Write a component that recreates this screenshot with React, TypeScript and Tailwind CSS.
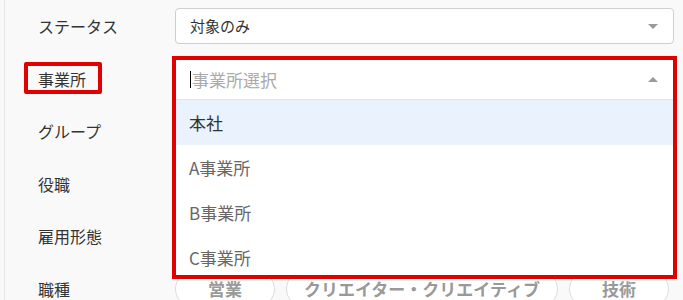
import React from "react";

const font = { fontFamily: '"Noto Sans CJK JP", "Noto Sans", sans-serif' };

function Label({ children }: { children: React.ReactNode }) {
  return (
    <div className="w-[170px] shrink-0 pl-[33px] text-[16px] leading-[24px] text-[#333]">{children}</div>
  );
}

function Row({ children }: { children: React.ReactNode }) {
  return <div className="flex h-[52.5px] items-center">{children}</div>;
}

export default function App() {
  const options = ["A事業所", "B事業所", "C事業所"];
  return (
    <div className="h-[300px] w-[683px] overflow-hidden bg-[#f9f9f9] pl-[4px]" style={font}>
      <div className="h-full border-l border-[#e6e6e6]">
        <Row>
          <Label>ステータス</Label>
          <div className="flex h-[36px] w-[499px] items-center justify-between rounded-[4px] border border-[#cfcfcf] bg-white pl-[14px] pr-[15px]">
            <span className="text-[15px] text-[#333]">対象のみ</span>
            <span className="h-0 w-0 border-x-[5.5px] border-t-[5px] border-x-transparent border-t-[#9a9a9a]" />
          </div>
        </Row>
        <Row>
          <div className="relative w-[170px] shrink-0 pl-[33px] text-[16px] leading-[24px] text-[#333]">
            事業所
            <span className="absolute left-[19px] top-[-5px] h-[32px] w-[78px] rounded-[2px] border-[4px] border-[#e00000]" />
          </div>
          <div className="relative h-[40px] w-[499px]">
            <div className="absolute left-0 right-0 top-0 z-10 bg-white">
              <div className="flex h-[40px] items-center justify-between border border-b-0 border-[#cfcfcf] pl-[14px] pr-[15px]">
                <span className="flex items-center text-[17px] text-[#aaa]">
                  <span className="mr-[1px] h-[17px] w-[1px] bg-black" />
                  事業所選択
                </span>
                <span className="h-0 w-0 border-x-[5.5px] border-b-[5px] border-x-transparent border-b-[#9a9a9a]" />
              </div>
              <div className="h-[177px] overflow-hidden border-x border-t border-[#e3e3e3]">
                <div className="flex h-[45px] items-center bg-[#eaf3fd] pl-[13px] text-[17px] text-[#333]">本社</div>
                {options.map((o) => (
                  <div key={o} className="flex h-[45px] items-center pl-[13px] text-[17px] text-[#666]">
                    {o}
                  </div>
                ))}
              </div>
            </div>
            <div className="pointer-events-none absolute left-[-3px] right-[-3px] top-[-3px] z-20 h-[223px] border-[4px] border-[#e00000]" />
          </div>
        </Row>
        <Row>
          <Label>グループ</Label>
        </Row>
        <Row>
          <Label>役職</Label>
        </Row>
        <Row>
          <Label>雇用形態</Label>
        </Row>
        <Row>
          <Label>職種</Label>
          <div className="flex gap-[11px]">
            <div className="flex h-[36px] w-[100px] items-center justify-center rounded-full border border-[#dcdcdc] bg-white text-[17px] font-bold text-[#999]">営業</div>
            <div className="flex h-[36px] w-[272px] items-center justify-center rounded-full border border-[#dcdcdc] bg-white text-[17px] font-bold text-[#999]">クリエイター・クリエイティブ</div>
            <div className="flex h-[36px] w-[100px] items-center justify-center rounded-full border border-[#dcdcdc] bg-white text-[17px] font-bold text-[#999]">技術</div>
          </div>
        </Row>
      </div>
    </div>
  );
}
